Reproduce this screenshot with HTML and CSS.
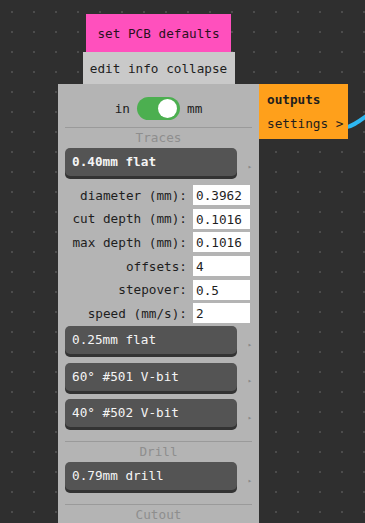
FILE: index.html
```html
<!DOCTYPE html>
<html lang="en">
<head>
<meta charset="UTF-8" />
<meta name="viewport" content="width=device-width, initial-scale=1" />
<title>PCB node</title>
<link rel="stylesheet" href="styles.css">
</head>
<body>

<div class="canvas">

<svg class="wire" width="20" height="35" viewBox="0 0 20 35">
<path d="M0 27.5 C 6 27, 12 23, 24 14" />
</svg>

<div class="node">
<div class="node-title">set PCB defaults</div>
<div class="node-tabs">edit info collapse</div>

<div class="panel">
<div class="units">
<span>in</span>
<span class="toggle"><span class="knob"></span></span>
<span>mm</span>
</div>

<div class="section">Traces</div>
<div class="tool-row"><div class="tool open">0.40mm flat</div><span class="arrow">&#9656;</span></div>

<div class="fields">
<label class="field">diameter (mm): <input type="text" value="0.3962"></label>
<label class="field">cut depth (mm): <input type="text" value="0.1016"></label>
<label class="field">max depth (mm): <input type="text" value="0.1016"></label>
<label class="field">offsets: <input type="text" value="4"></label>
<label class="field">stepover: <input type="text" value="0.5"></label>
<label class="field">speed (mm/s): <input type="text" value="2"></label>
</div>

<div class="tool-row"><div class="tool">0.25mm flat</div><span class="arrow">&#9656;</span></div>
<div class="tool-row"><div class="tool">60&deg; #501 V-bit</div><span class="arrow">&#9656;</span></div>
<div class="tool-row"><div class="tool">40&deg; #502 V-bit</div><span class="arrow">&#9656;</span></div>

<div class="section">Drill</div>
<div class="tool-row"><div class="tool">0.79mm drill</div><span class="arrow">&#9656;</span></div>

<div class="section">Cutout</div>
</div>
</div>

<div class="outputs">
<div class="outputs-title">outputs</div>
<div>settings &gt;</div>
</div>

</div>

</body>
</html>
```

FILE: styles.css
```css
html, body {
margin: 0;
height: 100%;
overflow: hidden;
}
body {
font-family: 'DejaVu Sans Mono', 'Liberation Mono', monospace;
font-size: 12.7px;
color: #1e1e1e;
}
.canvas {
position: relative;
width: 100%;
height: 100%;
overflow: hidden;
background-color: #2f2f2f;
background-image: radial-gradient(circle, #4c4c4c 1px, transparent 1.3px);
background-size: 22px 20px;
background-position: 1px 2px;
}
.node {
position: absolute;
left: 58px;
top: 14px;
display: flex;
flex-direction: column;
align-items: center;
}
.node-title {
width: 145px;
height: 38px;
line-height: 40px;
text-align: center;
background: #ff50bd;
color: #2a1020;
}
.node-tabs {
width: 152px;
height: 32px;
line-height: 34px;
text-align: center;
background: #c9c9c9;
}
.panel {
width: 187px;
padding: 13px 7px 20px;
background: #b4b4b4;
}
.units {
display: flex;
align-items: center;
justify-content: center;
gap: 7px;
height: 23px;
}
.toggle {
position: relative;
width: 43px;
height: 23px;
border-radius: 12px;
background: #4caf50;
}
.knob {
position: absolute;
right: 3px;
top: 2px;
width: 19px;
height: 19px;
border-radius: 50%;
background: #fff;
}
.section {
margin-top: 11px;
border-top: 1px solid #9a9a9a;
height: 17px;
line-height: 19px;
text-align: center;
color: #8e8e8e;
margin-bottom: 3px;
}
.units + .section {
margin-top: 7px;
}
.tool-row {
display: flex;
align-items: center;
margin-bottom: 5.5px;
}
.tool {
width: 166px;
height: 28px;
line-height: 28px;
padding-left: 7px;
border-radius: 5px;
background: #545454;
box-shadow: 0 3px 0 #333;
color: #f4f4f4;
margin-bottom: 3px;
}
.tool.open {
font-weight: bold;
}
.arrow {
margin-left: 11px;
margin-top: 6px;
font-size: 7px;
color: #8a8a8a;
}
.fields {
display: flex;
flex-direction: column;
gap: 3.7px;
margin: 6px 0 3px;
}
.field {
display: flex;
align-items: center;
justify-content: flex-end;
gap: 6px;
height: 20px;
padding-right: 2px;
}
.field input {
width: 57px;
height: 20px;
box-sizing: border-box;
border: none;
padding: 1px 3px 0;
font: inherit;
color: #1e1e1e;
background: #fff;
}
.outputs {
position: absolute;
left: 259px;
top: 84px;
width: 81px;
height: 55px;
padding-left: 8px;
background: #ffa01b;
line-height: 24px;
}
.outputs-title {
font-weight: bold;
margin-top: 4px;
}
.wire {
position: absolute;
left: 345px;
top: 100px;
}
.wire path {
fill: none;
stroke: #2eb8f2;
stroke-width: 4;
}
```
